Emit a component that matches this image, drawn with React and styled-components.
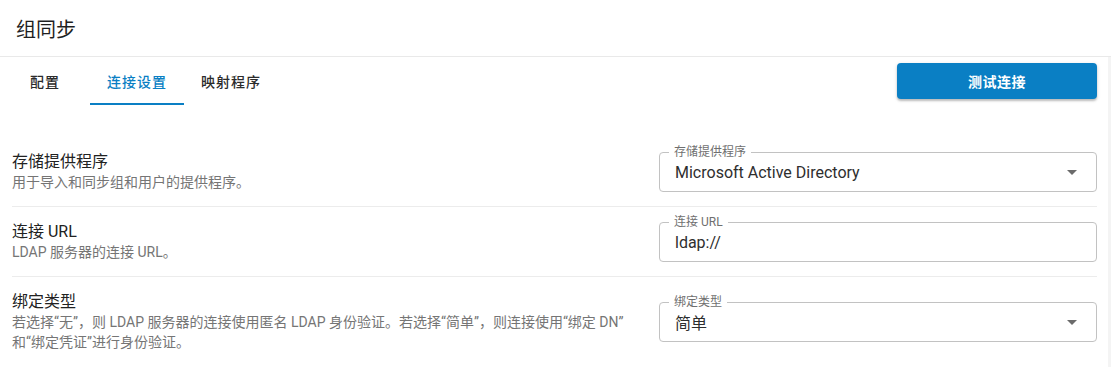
import React from "react";
import styled, { createGlobalStyle } from "styled-components";

const BLUE = "#0a7fc4";

const GlobalStyle = createGlobalStyle`
  body {
    margin: 0;
    background: #ffffff;
    font-family: "Roboto", "Noto Sans CJK SC", sans-serif;
    color: #222222;
  }
`;

const ROWS = [
  {
    title: "存储提供程序",
    desc: ["用于导入和同步组和用户的提供程序。"],
    label: "存储提供程序",
    value: "Microsoft Active Directory",
    select: true,
  },
  {
    title: "连接 URL",
    desc: ["LDAP 服务器的连接 URL。"],
    label: "连接 URL",
    value: "ldap://",
    select: false,
  },
  {
    title: "绑定类型",
    desc: [
      "若选择“无”，则 LDAP 服务器的连接使用匿名 LDAP 身份验证。若选择“简单”，则连接使用“绑定 DN”",
      "和“绑定凭证”进行身份验证。",
    ],
    label: "绑定类型",
    value: "简单",
    select: true,
  },
];

const TABS = ["配置", "连接设置", "映射程序"];

const ArrowDown = () => (
  <svg width="24" height="24" viewBox="0 0 24 24" fill="#6b6b6b">
    <path d="M7 10l5 5 5-5z" />
  </svg>
);

const Field = ({ label, value, select }) => (
  <FieldBox>
    <FieldLabel>{label}</FieldLabel>
    <FieldValue>{value}</FieldValue>
    {select && (
      <ArrowSlot>
        <ArrowDown />
      </ArrowSlot>
    )}
  </FieldBox>
);

const App = () => {
  return (
    <>
      <GlobalStyle />
      <Page>
        <Header>组同步</Header>
        <Body>
          <Main>
            <TabBar>
              <Tabs>
                {TABS.map((t, i) => (
                  <Tab key={t} $active={i === 1}>
                    {t}
                  </Tab>
                ))}
              </Tabs>
              <TestButton>测试连接</TestButton>
            </TabBar>
            <Form>
              {ROWS.map((row) => (
                <Row key={row.title}>
                  <TextBlock>
                    <Title>{row.title}</Title>
                    {row.desc.map((line) => (
                      <Desc key={line}>{line}</Desc>
                    ))}
                  </TextBlock>
                  <Field label={row.label} value={row.value} select={row.select} />
                </Row>
              ))}
            </Form>
          </Main>
          <Track />
        </Body>
      </Page>
    </>
  );
};

const Page = styled.div`
  width: 1111px;
  height: 367px;
  overflow: hidden;
  display: flex;
  flex-direction: column;
`;

const Header = styled.div`
  height: 56px;
  border-bottom: 1px solid #e9e9e9;
  display: flex;
  align-items: center;
  padding-left: 16px;
  font-size: 20px;
  color: #1f1f1f;
  flex-shrink: 0;
`;

const Body = styled.div`
  flex: 1;
  display: flex;
`;

const Main = styled.div`
  flex: 1;
`;

const Track = styled.div`
  width: 3px;
  background: #f4f4f4;
`;

const TabBar = styled.div`
  display: flex;
  justify-content: space-between;
  align-items: flex-start;
  padding-right: 11px;
`;

const Tabs = styled.div`
  display: flex;
`;

const Tab = styled.div`
  position: relative;
  height: 48px;
  min-width: 90px;
  padding: 0 17px;
  box-sizing: border-box;
  display: flex;
  align-items: center;
  justify-content: center;
  font-size: 14px;
  font-weight: 500;
  letter-spacing: 1px;
  color: ${(p) => (p.$active ? BLUE : "#2b2b2b")};

  &::after {
    content: "";
    position: absolute;
    left: 0;
    right: 0;
    bottom: 0;
    height: 2px;
    background: ${(p) => (p.$active ? BLUE : "transparent")};
  }
`;

const TestButton = styled.button`
  margin-top: 6px;
  width: 200px;
  height: 36px;
  border: none;
  border-radius: 4px;
  background: ${BLUE};
  color: #ffffff;
  font-family: inherit;
  font-size: 14px;
  font-weight: 700;
  letter-spacing: 0.5px;
  box-shadow: 0 2px 2px rgba(0, 0, 0, 0.2), 0 1px 4px rgba(0, 0, 0, 0.12);
`;

const Form = styled.div`
  margin-top: 32px;
  padding: 0 11px 0 12px;
`;

const Row = styled.div`
  display: flex;
  align-items: center;
  justify-content: space-between;
  padding: 15px 0 14px;
  border-bottom: 1px solid #ececec;

  &:last-child {
    border-bottom: none;
  }
`;

const TextBlock = styled.div`
  display: flex;
  flex-direction: column;
`;

const Title = styled.div`
  font-size: 16px;
  line-height: 20px;
  color: #222222;
`;

const Desc = styled.div`
  font-size: 14px;
  line-height: 20px;
  color: #757575;
  white-space: nowrap;
`;

const FieldBox = styled.div`
  position: relative;
  width: 438px;
  height: 40px;
  box-sizing: border-box;
  border: 1px solid #c2c2c2;
  border-radius: 4px;
  display: flex;
  align-items: center;
  padding: 0 14px 0 15px;
  flex-shrink: 0;
`;

const FieldLabel = styled.span`
  position: absolute;
  top: -8px;
  left: 9px;
  padding: 0 5px;
  background: #ffffff;
  font-size: 12px;
  line-height: 14px;
  color: #6f6f6f;
`;

const FieldValue = styled.span`
  flex: 1;
  font-size: 16px;
  color: #2e2e2e;
`;

const ArrowSlot = styled.span`
  display: flex;
  margin-right: -2px;
`;

export default App;
